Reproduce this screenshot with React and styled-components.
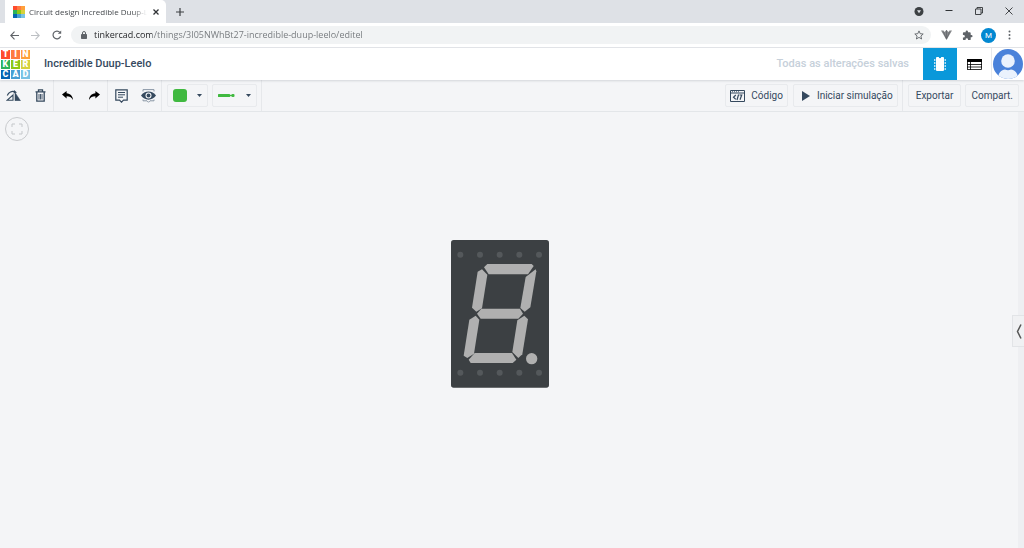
import React, { useState } from 'react';
import styled, { createGlobalStyle } from 'styled-components';

const GlobalStyle = createGlobalStyle`
  * {
    box-sizing: border-box;
  }

  body {
    margin: 0;
    overflow: hidden;
    font-family: Roboto, "Liberation Sans", sans-serif;
  }

  button {
    display: flex;
    align-items: center;
    justify-content: center;
    flex-shrink: 0;
    margin: 0;
    padding: 0;
    border: none;
    background: transparent;
    color: inherit;
    font: inherit;
    cursor: pointer;
  }

  svg {
    display: block;
    flex-shrink: 0;
  }
`;

const Page = styled.div`
  display: flex;
  flex-direction: column;
  min-height: 100vh;
  background: #f4f5f7;
`;

/* Browser window */
const TabStrip = styled.div`
  display: flex;
  height: 23px;
  padding-left: 5px;
  background: #dee1e6;
  color: #3c4043;
`;

const Tab = styled.div`
  display: flex;
  align-items: center;
  gap: 4px;
  width: 161px;
  padding: 0 5px 0 8px;
  border-radius: 0 5px 0 0;
  background: #fff;
`;

const TabTitle = styled.span`
  flex: 1;
  min-width: 0;
  color: #45494d;
  font-family: "Open Sans", "Noto Sans", sans-serif;
  font-size: 8px;
  line-height: 12px;
  white-space: nowrap;
  mask-image: linear-gradient(90deg, #000 88%, transparent);
`;

const TabButton = styled.button`
  width: ${(props) => props.$width || 10}px;
  height: 23px;
`;

const WindowButtons = styled.div`
  display: flex;
  margin-left: auto;
`;

const WindowButton = styled.button`
  width: 30px;
  height: 21px;
`;

const BrowserBar = styled.div`
  display: flex;
  align-items: center;
  height: 25px;
  padding: 0 4px;
  border-bottom: 1px solid #e4e6e9;
  background: #fff;
  color: #5f6368;
`;

const BrowserButton = styled.button`
  width: ${(props) => props.$width || 21}px;
  height: 22px;
  color: ${(props) => props.$color || '#5f6368'};
`;

const AddressBar = styled.div`
  display: flex;
  align-items: center;
  flex: 1;
  gap: 7px;
  height: 18px;
  margin: 0 5px 0 4px;
  padding: 0 6px 0 10px;
  border-radius: 9px;
  background: #f1f3f4;
`;

const AddressInput = styled.input`
  flex: 1;
  min-width: 0;
  padding: 0;
  border: none;
  outline: none;
  background: linear-gradient(90deg, #202124 58px, #73777b 58px);
  background-clip: text;
  color: transparent;
  font-family: "Open Sans", "Noto Sans", sans-serif;
  font-size: 9px;
  line-height: 16px;
`;

const ProfileButton = styled.button`
  width: 15px;
  height: 15px;
  margin: 0 3px;
  border-radius: 50%;
  background: #0288d1;
  color: #fff;
  font-size: 8px;
`;

/* Tinkercad header */
const Header = styled.header`
  display: flex;
  align-items: center;
  height: 32px;
  padding-left: 1px;
  background: #fff;
  box-shadow: 0 1px 2px rgba(60, 70, 85, 0.18);
  z-index: 1;
`;

const LogoGrid = styled.a`
  display: grid;
  grid-template-columns: repeat(3, ${(props) => props.$cell}px);
  grid-auto-rows: ${(props) => props.$cell}px;
  gap: ${(props) => props.$gap}px;
  color: #fff;
  font-size: ${(props) => props.$cell}px;
  font-weight: 900;
  text-decoration: none;
`;

const LogoCell = styled.span`
  display: flex;
  align-items: center;
  justify-content: center;
  background: ${(props) => props.$color};
  line-height: 1;
`;

const DesignName = styled.h1`
  margin: 0 0 0 14px;
  color: #35495e;
  font-size: 11px;
  font-weight: 500;
  line-height: 16px;
`;

const SaveStatus = styled.span`
  margin-left: auto;
  margin-right: 14px;
  color: #c6d0da;
  font-size: 11px;
  font-weight: 500;
  line-height: 16px;
`;

const ViewButton = styled.button`
  width: 34px;
  height: 32px;
  background: ${(props) => (props.$active ? '#0a98da' : '#fff')};
  color: ${(props) => (props.$active ? '#fff' : '#000')};
`;

const AvatarButton = styled.button`
  width: 33px;
  height: 32px;
  border-left: 1px solid #e7e9ec;
`;

/* Tools */
const Toolbar = styled.div`
  display: flex;
  height: 32px;
  border-bottom: 1px solid #e3e6e9;
  background: #f4f5f7;
  color: #35495e;
`;

const ToolGroup = styled.div`
  display: flex;
  align-items: center;
  gap: ${(props) => props.$gap || 0}px;
  padding: 0 ${(props) => props.$pad || 0}px;
  box-shadow: ${(props) => (props.$last ? 'none' : 'inset -1px 0 #e6e8eb')};
`;

const RightTools = styled.div`
  display: flex;
  margin-left: auto;
`;

const IconButton = styled.button`
  width: 27px;
  height: 30px;
  color: ${(props) => props.$color || '#35495e'};
`;

const BoxButton = styled.button`
  gap: ${(props) => props.$gap || 0}px;
  height: 23px;
  padding: 0 ${(props) => props.$pad}px;
  border: 1px solid #e8eaed;
  border-radius: 2px;
  font-size: 10px;
  line-height: 14px;
`;

const Swatch = styled.span`
  width: 14px;
  height: 13px;
  border-radius: 3px;
  background: #40b940;
`;

const Canvas = styled.main`
  position: relative;
  flex: 1;
  padding: 5px;
  border-right: 6px solid #eeeff2;
`;

const FitButton = styled.button`
  width: 24px;
  height: 24px;
  border: 1px solid #c9cbce;
  border-radius: 50%;
  color: #c4c7ca;
`;

const PlacedPart = styled.div`
  position: absolute;
  left: 451px;
  top: 128px;
`;

const PanelHandle = styled.button`
  position: absolute;
  right: -6px;
  top: 203px;
  width: 12px;
  height: 32px;
  border: 1px solid #e2e4e7;
  border-right: none;
  background: #f0f1f3;
  color: #555;
`;

const logoCells = [
  ['T', '#ff4b2d'],
  ['I', '#ff7b42'],
  ['N', '#ffa03a'],
  ['K', '#2cb35a'],
  ['E', '#8fc814'],
  ['R', '#d6d13c'],
  ['C', '#0566b3'],
  ['A', '#479fd3'],
  ['D', '#78c2e4'],
];

const segments = [
  '132,112 142,102 275,102 281,108 264,133 146,133',
  '126,118 142,134 126,235 109,245 96,233 113,125',
  '287,118 289,124 271,232 254,245 241,234 257,141',
  '111,251 124,236 240,236 249,251 235,266 122,266',
  '107,257 118,269 102,371 82,384 71,377 88,269',
  '253,257 264,268 247,373 235,384 217,366 232,271',
  '86,389 104,369 216,369 229,389 218,399 92,399',
];

const pinColumns = [61, 120, 179, 238, 297];

function Logo({ cell, gap }) {
  return (
    <LogoGrid href="#home" $cell={cell} $gap={gap} aria-label="Tinkercad">
      {logoCells.map(([letter, color]) => (
        <LogoCell key={letter} $color={color}>{cell > 5 ? letter : ''}</LogoCell>
      ))}
    </LogoGrid>
  );
}

function Caret() {
  return (
    <svg width="5" height="3" viewBox="0 0 5 3">
      <path d="M0 0h5L2.500 3z" fill="#35495e" />
    </svg>
  );
}

function SevenSegment() {
  return (
    <svg width="98" height="148" viewBox="33 30 294 444">
      <rect x="33" y="30" width="294" height="443" rx="8" fill="#3c4043" />
      {[74, 428].map((y) =>
        pinColumns.map((x) => <circle key={`${x}-${y}`} cx={x} cy={y} r="9" fill="#54585b" />)
      )}
      {segments.map((points) => (
        <polygon key={points} points={points} fill="#b0b0b0" />
      ))}
      <circle cx="275" cy="386" r="17" fill="#b0b0b0" />
    </svg>
  );
}

function BrowserChrome() {
  const [url, setUrl] = useState('tinkercad.com/things/3I05NWhBt27-incredible-duup-leelo/editel');

  return (
    <>
      <TabStrip>
        <Tab>
          <Logo cell={4} gap={0} />
          <TabTitle>Circuit design Incredible Duup-L</TabTitle>
          <TabButton aria-label="Close tab">
            <svg width="6" height="6" viewBox="0 0 6 6" stroke="#303336" strokeWidth="1.3">
              <path d="M.5.5l5 5M5.500.5l-5 5" />
            </svg>
          </TabButton>
        </Tab>
        <TabButton $width={28} aria-label="New tab">
          <svg width="8" height="8" viewBox="0 0 8 8" stroke="#3c4043" strokeWidth="1.2">
            <path d="M4 0v8M0 4h8" />
          </svg>
        </TabButton>
        <WindowButtons>
          <WindowButton aria-label="Search tabs">
            <svg width="10" height="10" viewBox="0 0 10 10">
              <circle cx="5" cy="5.500" r="4.500" fill="#3c4043" />
              <path d="M3 4.300h4L5 7.300z" fill="#dee1e6" />
            </svg>
          </WindowButton>
          <WindowButton aria-label="Minimize">
            <svg width="8" height="8" viewBox="0 0 8 8" stroke="#303336">
              <path d="M.5 3.500h7" />
            </svg>
          </WindowButton>
          <WindowButton aria-label="Restore">
            <svg width="8" height="8" viewBox="0 0 8 8" stroke="#303336" fill="none" strokeWidth=".9">
              <path d="M.5 2h5.500v5.500H.5zM2 2V.5h5.500V6H6" />
            </svg>
          </WindowButton>
          <WindowButton aria-label="Close">
            <svg width="8" height="8" viewBox="0 0 8 8" stroke="#303336" strokeWidth=".9">
              <path d="M.5.5l7 7M7.500.5l-7 7" />
            </svg>
          </WindowButton>
        </WindowButtons>
      </TabStrip>
      <BrowserBar>
        <BrowserButton aria-label="Back">
          <svg width="9" height="9" viewBox="0 0 9 9" fill="none" stroke="currentColor" strokeWidth="1.1">
            <path d="M9 4.500H1M4.500.7L.8 4.500l3.700 3.800" />
          </svg>
        </BrowserButton>
        <BrowserButton $color="#bdc0c4" aria-label="Forward">
          <svg width="9" height="9" viewBox="0 0 9 9" fill="none" stroke="currentColor" strokeWidth="1.1">
            <path d="M0 4.500h8M4.500.7l3.700 3.800-3.700 3.800" />
          </svg>
        </BrowserButton>
        <BrowserButton aria-label="Reload">
          <svg width="10" height="10" viewBox="0 0 10 10" fill="none" stroke="currentColor" strokeWidth="1.2">
            <path d="M8.600 6.300A3.900 3.900 0 1 1 8 2.500" />
            <path d="M9.200.4v3.400H5.800z" fill="currentColor" stroke="none" />
          </svg>
        </BrowserButton>
        <AddressBar>
          <svg width="6" height="8" viewBox="0 0 6 8">
            <rect y="3" width="6" height="5" rx=".7" fill="#5f6368" />
            <path d="M1.500 3V2a1.500 1.500 0 0 1 3 0v1" fill="none" stroke="#5f6368" />
          </svg>
          <AddressInput aria-label="Address" value={url} onChange={(e) => setUrl(e.target.value)} />
          <BrowserButton $width={12} aria-label="Bookmark">
            <svg width="10" height="10" viewBox="0 0 10 10" fill="none" stroke="currentColor" strokeWidth=".9">
              <path d="M5 .9l1.200 2.800 3 .3-2.300 2 .7 3L5 7.400 2.400 9l.7-3L.8 4l3-.3z" />
            </svg>
          </BrowserButton>
        </AddressBar>
        <BrowserButton aria-label="Extension">
          <svg width="11" height="10" viewBox="0 0 11 10">
            <path d="M0 .5h2.500l1 1.500L5.500 0l2 2 1-1.500H11L5.500 10z" fill="#85878a" />
            <path d="M2.500 2l3 7 3-7M5.500 0v8" stroke="#5b5e61" strokeWidth=".6" fill="none" />
          </svg>
        </BrowserButton>
        <BrowserButton aria-label="Extensions">
          <svg width="11" height="11" viewBox="0 0 24 24" fill="currentColor">
            <path d="M20.500 11H19V7a2 2 0 0 0-2-2h-4V3.500a2.500 2.500 0 0 0-5 0V5H4a2 2 0 0 0-2 2v3.800h1.500a2.700 2.700 0 0 1 0 5.400H2V20c0 1.100.9 2 2 2h3.800v-1.500a2.700 2.700 0 0 1 5.400 0V22H17a2 2 0 0 0 2-2v-4h1.500a2.500 2.500 0 0 0 0-5z" />
          </svg>
        </BrowserButton>
        <ProfileButton>M</ProfileButton>
        <BrowserButton aria-label="Menu">
          <svg width="3" height="10" viewBox="0 0 3 10" fill="currentColor">
            <circle cx="1.500" cy="1.500" r="1" />
            <circle cx="1.500" cy="5" r="1" />
            <circle cx="1.500" cy="8.500" r="1" />
          </svg>
        </BrowserButton>
      </BrowserBar>
    </>
  );
}

function AppHeader() {
  return (
    <Header>
      <Logo cell={9} gap={1} />
      <DesignName>Incredible Duup-Leelo</DesignName>
      <SaveStatus>Todas as alterações salvas</SaveStatus>
      <ViewButton $active aria-label="Circuit view">
        <svg width="12" height="14" viewBox="0 0 12 14" fill="currentColor">
          <path d="M2 1q0-1 1-1h1.800a1.200 1.200 0 0 0 2.400 0H9q1 0 1 1v12q0 1-1 1H3q-1 0-1-1z" />
          <path d="M.8 2v11M11.200 2v11" stroke="currentColor" strokeWidth="1" strokeDasharray="2 1" />
        </svg>
      </ViewButton>
      <ViewButton aria-label="Component list">
        <svg width="15" height="11" viewBox="0 0 15 11">
          <rect x=".5" y=".5" width="14" height="10" fill="#fff" stroke="currentColor" strokeWidth=".8" />
          <rect width="15" height="3" fill="currentColor" />
          <path d="M0 5.500h15M0 8h15M3.500 3v8" stroke="currentColor" strokeWidth=".8" />
        </svg>
      </ViewButton>
      <AvatarButton aria-label="Account">
        <svg width="30" height="30" viewBox="0 0 30 30">
          <clipPath id="avatarClip">
            <circle cx="15" cy="15" r="15" />
          </clipPath>
          <g clipPath="url(#avatarClip)">
            <rect width="30" height="30" fill="#4a82da" />
            <circle cx="15" cy="12" r="6.800" fill="#eaf2fd" />
            <path d="M5 30c0-6 3.500-9.500 7-9.500 2 1 4 1 6 0 3.500 0 7 3.500 7 9.500z" fill="#eaf2fd" />
          </g>
        </svg>
      </AvatarButton>
    </Header>
  );
}

function Tools() {
  return (
    <Toolbar>
      <ToolGroup>
        <IconButton aria-label="Mirror">
          <svg width="15" height="11" viewBox="0 0 15 11" fill="none" stroke="currentColor">
            <path d="M7 5v5.300H1z" strokeWidth="1.100" />
            <path d="M9 2.500v8.300h5.500z" fill="currentColor" strokeWidth=".5" />
            <path d="M1.300 5.500C2.500 2 6 .7 9 1.800" strokeWidth="1.200" />
            <path d="M8 0l3 2.400-3.500 1z" fill="currentColor" stroke="none" />
          </svg>
        </IconButton>
        <IconButton aria-label="Delete">
          <svg width="11" height="13" viewBox="0 0 11 13" fill="none" stroke="currentColor" strokeWidth="1.300">
            <path d="M.5 2.800h10M3.500 2.500V.8h4v1.700M1.800 3v9.200h7.400V3" />
            <path d="M4 5v5.500M5.500 5v5.500M7 5v5.500" strokeWidth=".9" />
          </svg>
        </IconButton>
      </ToolGroup>
      <ToolGroup>
        <IconButton $color="#000" aria-label="Undo">
          <svg width="11" height="9" viewBox="0 0 11 9" fill="currentColor">
            <path d="M0 3.600L4.600 0v2.200C8.500 2.500 10.700 5 11 9 9.500 6.200 7.600 5.300 4.600 5.300v2.200z" />
          </svg>
        </IconButton>
        <IconButton $color="#000" aria-label="Redo">
          <svg width="11" height="9" viewBox="0 0 11 9" fill="currentColor">
            <path d="M11 3.600L6.400 0v2.200C2.500 2.500.3 5 0 9c1.500-2.800 3.400-3.700 6.400-3.700v2.200z" />
          </svg>
        </IconButton>
      </ToolGroup>
      <ToolGroup>
        <IconButton aria-label="Notes">
          <svg width="13" height="14" viewBox="0 0 13 14" fill="none" stroke="currentColor" strokeWidth="1.200">
            <path d="M.8.8h11.400v10.400H8.500l-2 2-2-2H.8z" />
            <path d="M3 3.500h7M3 5.800h7M3 8.200h5" strokeWidth="1" />
          </svg>
        </IconButton>
        <IconButton aria-label="Show notes">
          <svg width="15" height="14" viewBox="0 0 15 14" fill="none">
            <path d="M2 2.500V.6h11v1.900M2 10.500v1.300h4l1.500 1.500L9 11.800h4v-1.300" stroke="#8b98a6" strokeWidth="1" />
            <path d="M0 6.500C3.500 1 11.500 1 15 6.500c-3.500 5.500-11.500 5.500-15 0z" fill="currentColor" />
            <circle cx="7.500" cy="6.500" r="3" fill="#f4f5f7" />
            <circle cx="7.500" cy="6.500" r="1.900" fill="currentColor" />
          </svg>
        </IconButton>
      </ToolGroup>
      <ToolGroup $gap={4} $pad={5}>
        <BoxButton $gap={10} $pad={5} aria-label="Wire color">
          <Swatch />
          <Caret />
        </BoxButton>
        <BoxButton $gap={11} $pad={5} aria-label="Wire type">
          <svg width="17" height="3" viewBox="0 0 17 3" fill="#40b940">
            <rect width="12" height="3" rx=".5" />
            <path d="M12 .8h2.500v1.400H12z" />
            <rect x="13.500" width="3" height="3" rx="1" />
          </svg>
          <Caret />
        </BoxButton>
      </ToolGroup>
      <RightTools>
        <ToolGroup $gap={5} $pad={5}>
          <BoxButton $gap={6} $pad={4}>
            <svg width="15" height="12" viewBox="0 0 15 12" fill="none" stroke="currentColor">
              <path d="M.5 11.500V.5h14v11zM.5 3h14" />
              <path d="M2 1.700h7" strokeDasharray="1 1" strokeWidth=".8" />
              <path d="M5.800 5L3.500 7.200l2.300 2.200M9.500 5h2.200L10 9.800M8.600 4.500L7 10" strokeWidth="1.200" />
            </svg>
            Código
          </BoxButton>
          <BoxButton $gap={7} $pad={4}>
            <svg width="12" height="10" viewBox="0 0 12 10">
              <path d="M4 0l8 5-8 5z" fill="currentColor" />
            </svg>
            Iniciar simulação
          </BoxButton>
        </ToolGroup>
        <ToolGroup $gap={4} $pad={5} $last>
          <BoxButton $pad={7}>Exportar</BoxButton>
          <BoxButton $pad={5}>Compart.</BoxButton>
        </ToolGroup>
      </RightTools>
    </Toolbar>
  );
}

function App() {
  return (
    <Page>
      <GlobalStyle />
      <BrowserChrome />
      <AppHeader />
      <Tools />
      <Canvas>
        <FitButton aria-label="Zoom to fit">
          <svg width="12" height="12" viewBox="0 0 12 12" fill="none" stroke="currentColor">
            <path d="M1 4V1h3M8 1h3v3M11 8v3H8M4 11H1V8" />
          </svg>
        </FitButton>
        <PlacedPart>
          <SevenSegment />
        </PlacedPart>
        <PanelHandle aria-label="Open components">
          <svg width="6" height="15" viewBox="0 0 6 15" fill="none" stroke="currentColor" strokeWidth="1.500">
            <path d="M5 .5L1.500 7.500 5 14.500" />
          </svg>
        </PanelHandle>
      </Canvas>
    </Page>
  );
}

export default App;
